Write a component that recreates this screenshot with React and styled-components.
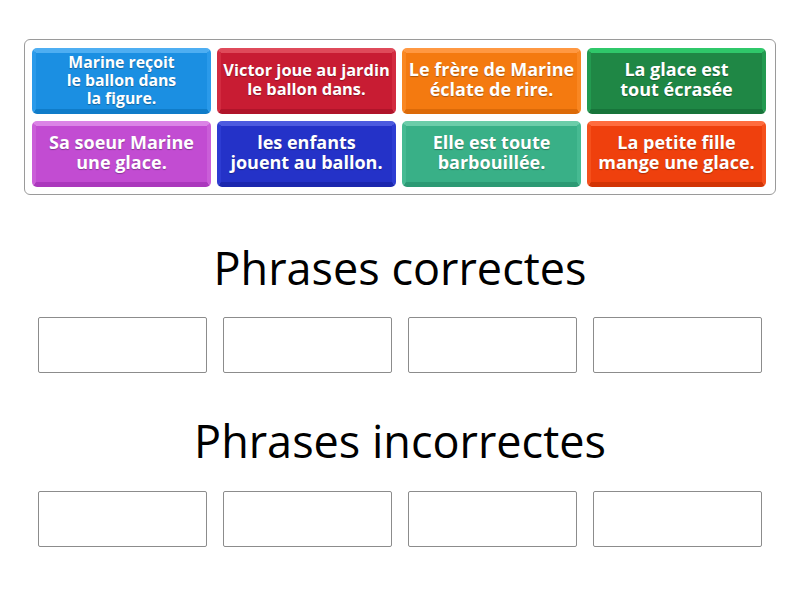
import React from "react";
import styled, { createGlobalStyle } from "styled-components";

const Global = createGlobalStyle`
  body {
    margin: 0;
    background: #ffffff;
    font-family: "Open Sans", "Noto Sans", sans-serif;
  }
`;

const Page = styled.div`
  width: 800px;
  height: 600px;
  padding-top: 39px;
  box-sizing: border-box;
`;

const Pool = styled.div`
  margin: 0 24px;
  border: 1px solid #9a9a9a;
  border-radius: 6px;
  padding: 8px 7px 7px 7px;
  display: grid;
  grid-template-columns: repeat(4, 179px);
  grid-auto-rows: 66px;
  column-gap: 6px;
  row-gap: 7px;
`;

const Tile = styled.div`
  box-sizing: border-box;
  display: flex;
  align-items: center;
  justify-content: center;
  text-align: center;
  background: ${(p) => p.base};
  border-top: 5px solid ${(p) => p.top};
  border-left: 4px solid ${(p) => p.side};
  border-right: 4px solid ${(p) => p.side};
  border-bottom: 5px solid ${(p) => p.bottom};
  border-radius: 5px;
  color: #ffffff;
  font-weight: 700;
  font-size: ${(p) => p.size || 18}px;
  line-height: ${(p) => p.lh || 20}px;
  text-shadow: 0 1px 1px rgba(0, 0, 0, 0.3);
  padding: 0 1px ${(p) => p.pb}px;
  white-space: nowrap;
`;

const Heading = styled.h2`
  margin: ${(p) => p.mt}px 0 ${(p) => p.mb}px;
  font-weight: 400;
  font-size: 45px;
  line-height: 60px;
  color: #000000;
  text-align: center;
`;

const Slots = styled.div`
  display: flex;
  justify-content: center;
  gap: 16px;
`;

const Slot = styled.div`
  width: 169px;
  height: 56px;
  box-sizing: border-box;
  border: 1px solid #8c8c8c;
  border-radius: 2px;
  background: #ffffff;
`;

const tiles = [
  { text: ["Marine reçoit", "le ballon dans", "la figure."], base: "#1b8fe2", top: "#4eaef2", side: "#2a9aea", bottom: "#0f7cc9", size: 15.8, lh: 18, pb: 2 },
  { text: ["Victor joue au jardin", "le ballon dans."], base: "#c81c33", top: "#df4a5a", side: "#d22b40", bottom: "#b0142a", size: 16.4, lh: 19, pb: 4 },
  { text: ["Le frère de Marine", "éclate de rire."], base: "#f47a10", top: "#ff9842", side: "#f98722", bottom: "#dc6a08", pb: 4 },
  { text: ["La glace est", "tout écrasée"], base: "#1f8745", top: "#2fc86a", side: "#239a50", bottom: "#17743a", pb: 4 },
  { text: ["Sa soeur Marine", "une glace."], base: "#c24cd2", top: "#db84e6", side: "#ca5ed8", bottom: "#ab38bd", pb: 4 },
  { text: ["les enfants", "jouent au ballon."], base: "#2432c8", top: "#4c5adf", side: "#2d3cd2", bottom: "#1b27ae", pb: 4 },
  { text: ["Elle est toute", "barbouillée."], base: "#39b087", top: "#6ccda9", side: "#46ba92", bottom: "#2c9a74", pb: 4 },
  { text: ["La petite fille", "mange une glace."], base: "#ef400d", top: "#ff6c3e", side: "#f5501c", bottom: "#d23405", pb: 4 },
];

export default function App() {
  return (
    <Page>
      <Global />
      <Pool>
        {tiles.map((t, i) => (
          <Tile key={i} base={t.base} top={t.top} side={t.side} bottom={t.bottom} size={t.size} lh={t.lh} pb={t.pb}>
            <div>
              {t.text.map((line, j) => (
                <div key={j}>{line}</div>
              ))}
            </div>
          </Tile>
        ))}
      </Pool>

      <Heading mt={43} mb={19}>Phrases correctes</Heading>
      <Slots>
        <Slot />
        <Slot />
        <Slot />
        <Slot />
      </Slots>

      <Heading mt={38} mb={20}>Phrases incorrectes</Heading>
      <Slots>
        <Slot />
        <Slot />
        <Slot />
        <Slot />
      </Slots>
    </Page>
  );
}
